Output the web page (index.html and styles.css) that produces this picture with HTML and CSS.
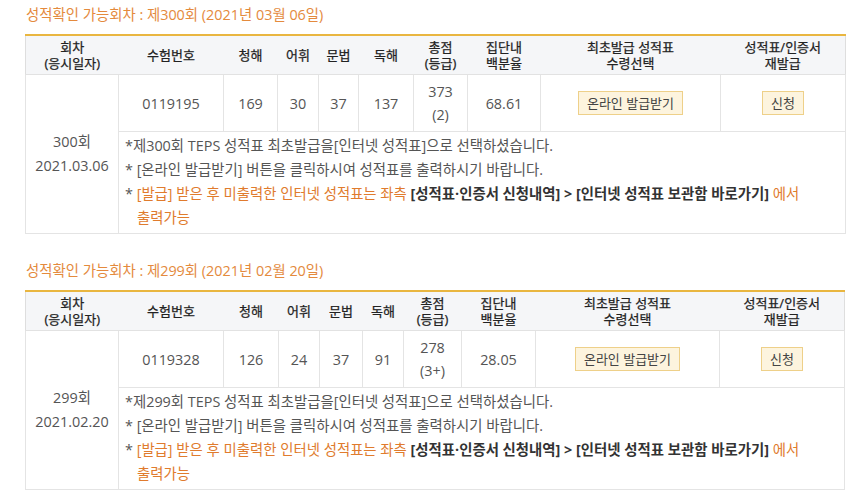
FILE: index.html
```html
<!DOCTYPE html>
<html lang="ko">
<head>
<meta charset="utf-8">
<title>성적확인</title>
<link rel="stylesheet" href="styles.css">
</head>
<body>
<main class="page">
  <section class="round">
    <h3 class="round-title">성적확인 가능회차 : 제300회 (2021년 03월 06일)</h3>
    <table class="score score--a">
      <colgroup>
        <col class="c1"><col class="c2"><col class="c3"><col class="c4"><col class="c5"><col class="c6"><col class="c7"><col class="c8"><col class="c9"><col class="c10">
      </colgroup>
      <thead>
        <tr>
          <th>회차<br>(응시일자)</th>
          <th>수험번호</th>
          <th>청해</th>
          <th>어휘</th>
          <th>문법</th>
          <th>독해</th>
          <th>총점<br>(등급)</th>
          <th>집단내<br>백분율</th>
          <th>최초발급 성적표<br>수령선택</th>
          <th>성적표/인증서<br>재발급</th>
        </tr>
      </thead>
      <tbody>
        <tr class="data-row">
          <td rowspan="2" class="round-cell">300회<br>2021.03.06</td>
          <td>0119195</td>
          <td>169</td>
          <td>30</td>
          <td>37</td>
          <td>137</td>
          <td>373<br>(2)</td>
          <td>68.61</td>
          <td><button class="btn" type="button">온라인 발급받기</button></td>
          <td><button class="btn" type="button">신청</button></td>
        </tr>
        <tr>
          <td colspan="9" class="notes">
            <p>*제300회 TEPS 성적표 최초발급을[인터넷 성적표]으로 선택하셨습니다.</p>
            <p>* [온라인 발급받기] 버튼을 클릭하시여 성적표를 출력하시기 바랍니다.</p>
            <p class="hang">* <span class="accent">[발급] 받은 후 미출력한 인터넷 성적표는 좌측</span> <strong>[성적표·인증서 신청내역] &gt; [인터넷 성적표 보관함 바로가기]</strong> <span class="accent">에서 출력가능</span></p>
          </td>
        </tr>
      </tbody>
    </table>
  </section>

  <section class="round">
    <h3 class="round-title">성적확인 가능회차 : 제299회 (2021년 02월 20일)</h3>
    <table class="score score--b">
      <colgroup>
        <col class="c1"><col class="c2"><col class="c3"><col class="c4"><col class="c5"><col class="c6"><col class="c7"><col class="c8"><col class="c9"><col class="c10">
      </colgroup>
      <thead>
        <tr>
          <th>회차<br>(응시일자)</th>
          <th>수험번호</th>
          <th>청해</th>
          <th>어휘</th>
          <th>문법</th>
          <th>독해</th>
          <th>총점<br>(등급)</th>
          <th>집단내<br>백분율</th>
          <th>최초발급 성적표<br>수령선택</th>
          <th>성적표/인증서<br>재발급</th>
        </tr>
      </thead>
      <tbody>
        <tr class="data-row">
          <td rowspan="2" class="round-cell">299회<br>2021.02.20</td>
          <td>0119328</td>
          <td>126</td>
          <td>24</td>
          <td>37</td>
          <td>91</td>
          <td>278<br>(3+)</td>
          <td>28.05</td>
          <td><button class="btn" type="button">온라인 발급받기</button></td>
          <td><button class="btn" type="button">신청</button></td>
        </tr>
        <tr>
          <td colspan="9" class="notes">
            <p>*제299회 TEPS 성적표 최초발급을[인터넷 성적표]으로 선택하셨습니다.</p>
            <p>* [온라인 발급받기] 버튼을 클릭하시여 성적표를 출력하시기 바랍니다.</p>
            <p class="hang">* <span class="accent">[발급] 받은 후 미출력한 인터넷 성적표는 좌측</span> <strong>[성적표·인증서 신청내역] &gt; [인터넷 성적표 보관함 바로가기]</strong> <span class="accent">에서 출력가능</span></p>
          </td>
        </tr>
      </tbody>
    </table>
  </section>
</main>
</body>
</html>
```
FILE: styles.css
```css
* { box-sizing: border-box; }

html, body {
  margin: 0;
  padding: 0;
  background: #ffffff;
}

body {
  font-family: "Open Sans", "Noto Sans CJK KR", sans-serif;
  font-size: 14.4px;
  color: #555555;
}

.page {
  padding: 5px 3px 0 25px;
  display: flex;
  flex-direction: column;
  gap: 27px;
}

.round-title {
  margin: 0 0 9px 1px;
  font-size: 14.4px;
  font-weight: normal;
  line-height: 20px;
  color: #e48a3d;
}

.score {
  width: 820px;
  table-layout: fixed;
  border-collapse: collapse;
  border-top: 2px solid #e9b640;
  border-left: 1px solid #dedede;
  border-right: 1px solid #dedede;
  border-bottom: 1px solid #dedede;
}

.score--a .c1 { width: 93px; }
.score--a .c2 { width: 105px; }
.score--a .c3 { width: 54px; }
.score--a .c4 { width: 41px; }
.score--a .c5 { width: 40px; }
.score--a .c6 { width: 55px; }
.score--a .c7 { width: 54px; }
.score--a .c8 { width: 73px; }
.score--a .c9 { width: 180px; }
.score--a .c10 { width: 125px; }

.score--b .c1 { width: 93px; }
.score--b .c2 { width: 105px; }
.score--b .c3 { width: 55px; }
.score--b .c4 { width: 41px; }
.score--b .c5 { width: 43px; }
.score--b .c6 { width: 41px; }
.score--b .c7 { width: 58px; }
.score--b .c8 { width: 74px; }
.score--b .c9 { width: 184px; }
.score--b .c10 { width: 125px; }

.score th {
  height: 38px;
  padding: 3px 0;
  background: #f5f6f8;
  color: #222222;
  font-size: 13px;
  font-weight: normal;
  -webkit-text-stroke: 0.25px #222222;
  line-height: 16px;
  text-align: center;
  vertical-align: middle;
  border-bottom: 1px solid #e2e2e2;
}

.score td {
  padding: 0;
  text-align: center;
  vertical-align: middle;
  line-height: 23px;
  border: 1px solid #e4e4e4;
}

.data-row td {
  height: 57px;
}

.round-cell {
  line-height: 24px !important;
}

.btn {
  font-family: inherit;
  font-size: 13px;
  color: #444444;
  height: 24px;
  line-height: 22px;
  padding: 0 8px;
  background: #fdf4de;
  border: 1px solid #eed089;
  border-radius: 0;
  cursor: pointer;
}

.score td.notes {
  text-align: left;
  vertical-align: top;
  padding: 2px 8px 3px 6px;
  word-break: keep-all;
}

.notes p {
  margin: 0;
  line-height: 24px;
}

.notes p.hang {
  padding-left: 12px;
  text-indent: -12px;
}

.accent {
  color: #e07b2d;
}

.notes strong {
  color: #333333;
  font-weight: bold;
}
```
